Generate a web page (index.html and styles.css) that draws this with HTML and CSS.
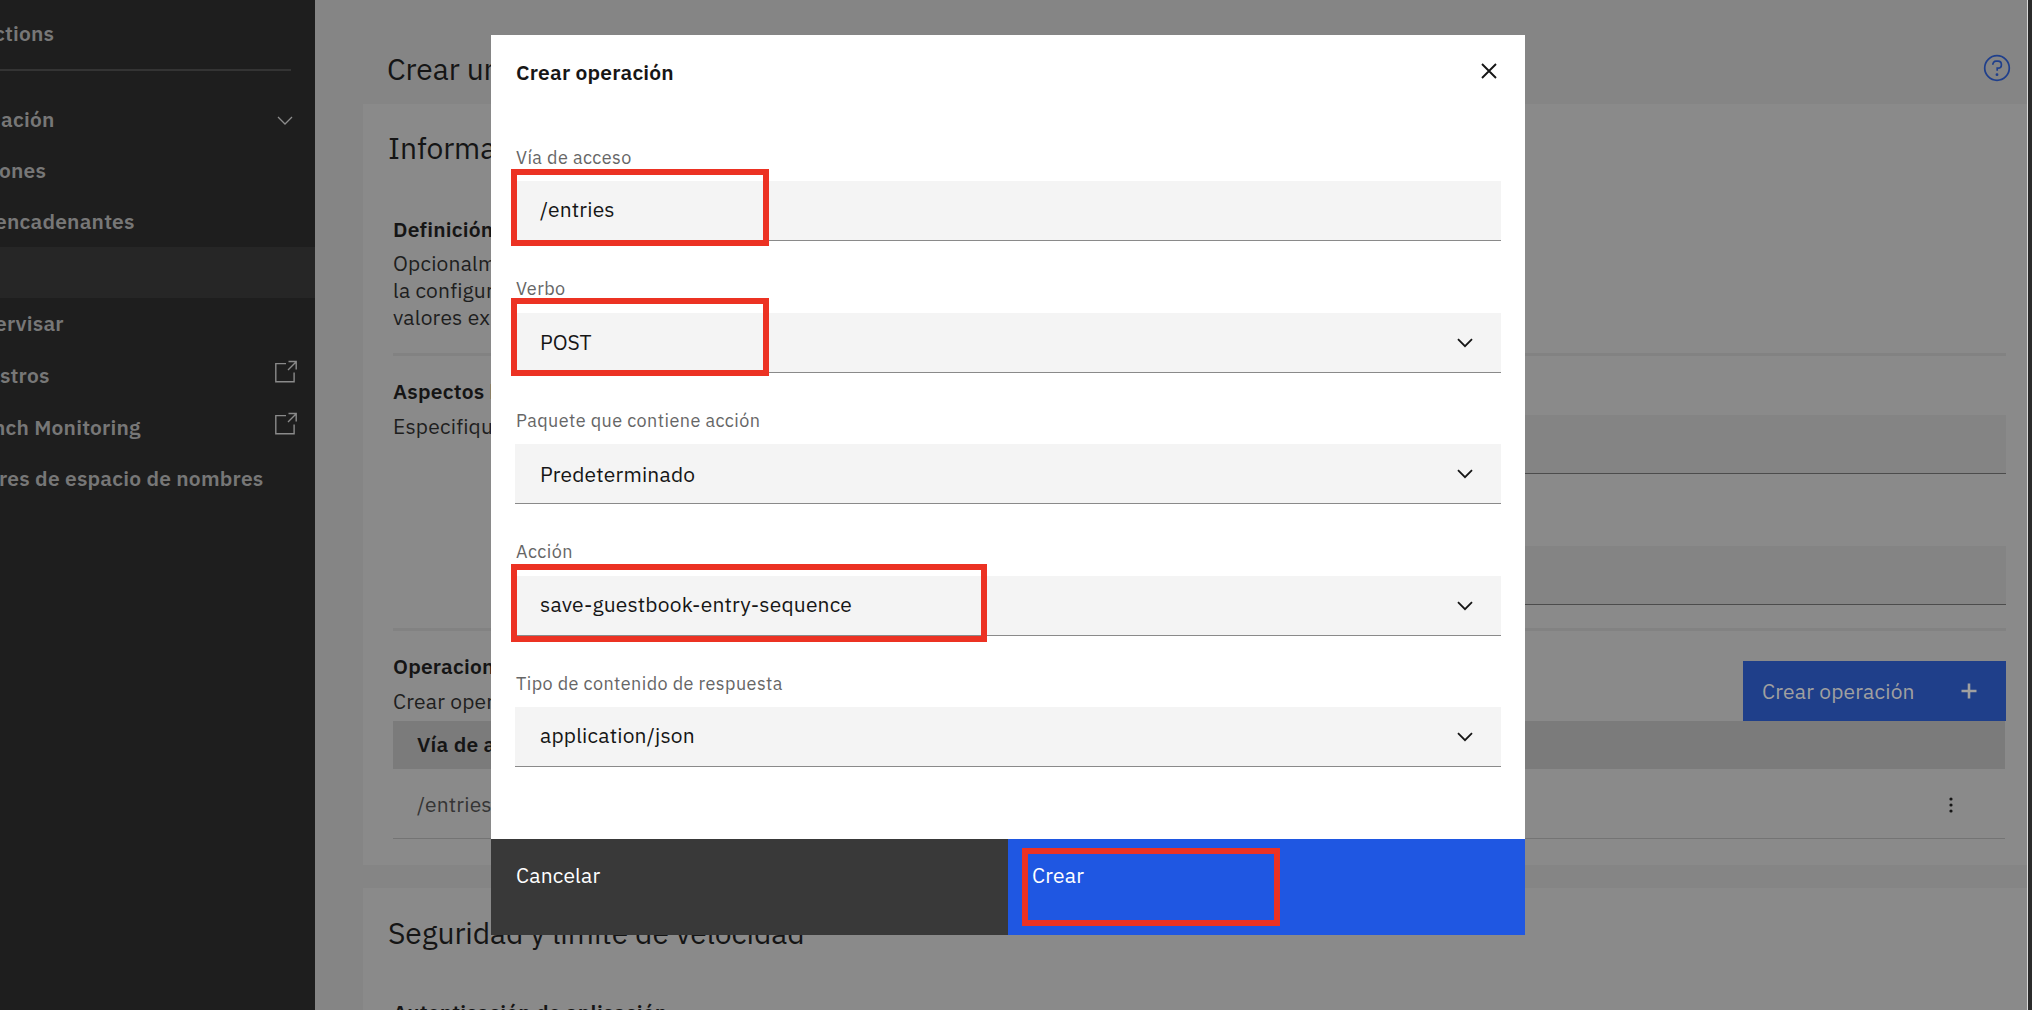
FILE: index.html
```html
<!DOCTYPE html>
<html lang="es">
<head>
<meta charset="utf-8">
<title>Crear operación</title>
<link rel="stylesheet" href="styles.css">
</head>
<body>
<div class="app">
  <nav class="sidebar">
    <div class="brand"><span class="cut-c">ctions</span></div>
    <hr class="side-rule">
    <a class="nav-item nav-parent"><span class="cut-a">ación</span>
      <svg class="nav-chevron" width="16" height="10" viewBox="0 0 16 10"><path d="M1 1l7 7 7-7" fill="none" stroke="#8d8d8d" stroke-width="1.3"/></svg></a>
    <a class="nav-item"><span class="cut-o">ones</span></a>
    <a class="nav-item"><span class="cut-e">encadenantes</span></a>
    <a class="nav-item active"></a>
    <a class="nav-item"><span class="cut-er">ervisar</span></a>
    <a class="nav-item tall"><span class="cut-s">stros</span>
      <svg class="launch" width="24" height="24" viewBox="0 0 24 24"><path d="M12 3.6H1.8v18.2h18.3V12.500M14 10l8-8M14.500 1.500h7.700v8" fill="none" stroke="#8a8a8a" stroke-width="1.4"/></svg></a>
    <a class="nav-item taller"><span class="cut-n">nch Monitoring</span>
      <svg class="launch" width="24" height="24" viewBox="0 0 24 24"><path d="M12 3.6H1.8v18.2h18.3V12.500M14 10l8-8M14.500 1.500h7.700v8" fill="none" stroke="#8a8a8a" stroke-width="1.4"/></svg></a>
    <a class="nav-item"><span class="cut-r">res de espacio de nombres</span></a>
  </nav>

  <main class="content">
    <header class="page-head">
      <h1>Crear un</h1>
      <svg class="help" width="28" height="28" viewBox="0 0 28 28"><circle cx="14" cy="14" r="12.300" fill="none" stroke="#1f3f8c" stroke-width="1.700"/><path d="M9.800 10.800c0-2 1.200-3.600 3.200-3.600h2c2 0 3.400 1.500 3.400 3.500s-1.400 3.500-3.400 3.500h-.8v2.600" fill="none" stroke="#1f3f8c" stroke-width="1.700"/><circle cx="14" cy="20.700" r="1.400" fill="#1f3f8c"/></svg>
    </header>

    <section class="panel info">
      <h2>Informa</h2>
      <div class="block definition">
        <h3>Definición</h3>
        <p>Opcionalm<br>la configur<br>valores ex</p>
      </div>
      <div class="block basics">
        <div class="desc">
          <h3>Aspectos b</h3>
          <p>Especifiqu</p>
        </div>
        <div class="inputs"><div class="dim-input"></div><div class="dim-input"></div></div>
      </div>
      <div class="block operations">
        <div class="ops-head">
          <div class="desc">
            <h3>Operacion</h3>
            <p>Crear oper</p>
          </div>
          <button class="add"><span>Crear operación</span>
            <svg width="16" height="16" viewBox="0 0 16 16"><path d="M8 .5v15M.5 8h15" stroke="#a0a0a0" stroke-width="2.600"/></svg></button>
        </div>
        <div class="table-head">Vía de a</div>
        <div class="table-row"><span>/entries</span>
          <svg width="4" height="16" viewBox="0 0 4 16" fill="#151515"><circle cx="2" cy="2" r="1.600"/><circle cx="2" cy="8" r="1.600"/><circle cx="2" cy="14" r="1.600"/></svg></div>
      </div>
    </section>

    <section class="panel security">
      <h2>Seguridad y límite de velocidad</h2>
      <h3>Autenticación de aplicación</h3>
    </section>
  </main>
  <div class="edge"></div>
</div>

<div class="modal">
  <header class="modal-head">
    <h2>Crear operación</h2>
    <svg width="16" height="16" viewBox="0 0 16 16"><path d="M1 1l14 14M15 1L1 15" stroke="#161616" stroke-width="1.900"/></svg>
  </header>
  <form class="form">
    <div class="field"><label>Vía de acceso</label>
      <div class="control"><span class="value">/entries</span></div></div>
    <div class="field"><label>Verbo</label>
      <div class="control"><span class="value v-post">POST</span>
        <svg class="chev" width="16" height="10" viewBox="0 0 16 10"><path d="M1 1.200l7 7 7-7" fill="none" stroke="#161616" stroke-width="1.800"/></svg></div></div>
    <div class="field"><label>Paquete que contiene acción</label>
      <div class="control"><span class="value v-pkg">Predeterminado</span>
        <svg class="chev" width="16" height="10" viewBox="0 0 16 10"><path d="M1 1.200l7 7 7-7" fill="none" stroke="#161616" stroke-width="1.800"/></svg></div></div>
    <div class="field"><label>Acción</label>
      <div class="control"><span class="value">save-guestbook-entry-sequence</span>
        <svg class="chev" width="16" height="10" viewBox="0 0 16 10"><path d="M1 1.200l7 7 7-7" fill="none" stroke="#161616" stroke-width="1.800"/></svg></div></div>
    <div class="field"><label>Tipo de contenido de respuesta</label>
      <div class="control"><span class="value">application/json</span>
        <svg class="chev" width="16" height="10" viewBox="0 0 16 10"><path d="M1 1.200l7 7 7-7" fill="none" stroke="#161616" stroke-width="1.800"/></svg></div></div>
  </form>
  <footer class="modal-foot">
    <button class="cancel">Cancelar</button>
    <button class="create">Crear</button>
  </footer>
</div>

<div class="mark mark-path"></div>
<div class="mark mark-verb"></div>
<div class="mark mark-action"></div>
<div class="mark mark-create"></div>
</body>
</html>
```
FILE: styles.css
```css
* { box-sizing: border-box; margin: 0; padding: 0; }
body {
  width: 2032px; height: 1010px; overflow: hidden; position: relative;
  font: 400 21px/27px "IBM Plex Sans", Roboto, sans-serif;
  letter-spacing: .19px; color: #161616; background: #858585;
}
h1, h2 { font-size: 30px; font-weight: 400; line-height: 38px; letter-spacing: -.07px; white-space: nowrap; }
h3 { font-size: 21px; font-weight: 600; line-height: 26px; letter-spacing: .2px; white-space: nowrap; }
button { border: 0; font: inherit; letter-spacing: inherit; text-align: left; }
svg { display: block; flex: none; }

.app { display: grid; grid-template-columns: 315px 1fr 5px; height: 1010px; }

/* Sidebar */
.sidebar { background: #1e1e1e; color: #777; font-weight: 600; letter-spacing: .2px; overflow: hidden; white-space: nowrap; }
.brand { height: 69px; padding-top: 20px; }
.side-rule { border: 0; height: 2px; width: 291px; background: #343434; margin-bottom: 23px; }
.nav-item { display: flex; align-items: center; justify-content: space-between; height: 51px; }
.nav-item.active { background: #262626; }
.nav-item.tall { height: 52.500px; }
.nav-item.taller { height: 51.500px; }
.nav-chevron { margin-right: 22px; margin-top: 2px; }
.launch { margin: -6px 17px 0 0; }
.cut-c { margin-left: -6px; }
.cut-a { margin-left: 1px; }
.cut-o { margin-left: -1px; }
.cut-e { margin-left: -5px; }
.cut-er { margin-left: -5px; }
.cut-s { margin-left: 0; }
.cut-n { margin-left: -7px; }
.cut-r { margin-left: -1px; }

/* Page behind the dialog */
.content { display: flex; flex-direction: column; color: #151515; min-width: 0; }
.page-head { flex: none; display: flex; justify-content: space-between; height: 104px; padding: 50px 16px 0 72px; }
.help { margin-top: 3.500px; }
.panel { margin-left: 48px; background: #8a8a8a; flex: none; }
.info { height: 761px; padding: 25px 21px 0 30px; margin-bottom: 23px; }
.info > h2 { margin-left: -5px; }
.block { border-bottom: 3px solid #828282; }
.block p { white-space: nowrap; color: #1e1e1e; }
.definition { height: 189px; padding-top: 49px; }
.definition p { margin-top: 8px; }
.basics { height: 275px; display: flex; padding-top: 22px; }
.desc { width: 540px; }
.desc p { margin-top: 9px; }
.inputs { flex: 1; padding-top: 37px; display: grid; grid-template-rows: 59px 59px; row-gap: 72px; }
.dim-input { background: #848484; border-bottom: 1.500px solid #4c4c4c; }
.operations { border-bottom: 0; padding-top: 22px; }
.ops-head { display: flex; justify-content: space-between; height: 68px; }
.add { display: flex; justify-content: space-between; align-items: center; width: 263px; height: 60px; margin-top: 8px; padding: 0 29px 0 19px; background: #1f3f8a; color: #a0a0a0; }
.table-head { height: 48px; margin-right: 1px; padding: 10px 24px; background: #7b7b7b; font-weight: 600; letter-spacing: .2px; }
.table-row { height: 70px; margin-right: 1px; padding: 2px 52px 0 24px; display: flex; justify-content: space-between; align-items: center; border-bottom: 1px solid #747474; color: #353535; }
.security { height: 122px; padding: 26px 0 0 25px; }
.security h3 { margin: 47px 0 0 5px; }
.edge { background: #2b2b2b; border-left: 1.500px solid #d8d8d8; }

/* Dialog */
.modal { position: absolute; left: 491px; top: 35px; width: 1034px; height: 900px; background: #fff; display: flex; flex-direction: column; }
.modal-head { display: flex; justify-content: space-between; height: 110.500px; padding: 23px 28px 0 25px; }
.modal-head h2 { font-size: 21px; font-weight: 600; line-height: 28px; letter-spacing: .2px; }
.modal-head svg { margin-top: 5px; }
.form { flex: 1; padding: 0 24px; display: flex; flex-direction: column; gap: 36.100px; }
.field label { display: block; height: 35.500px; padding-left: 1px; font-size: 18px; line-height: 24px; letter-spacing: .43px; color: #666; }
.control { display: flex; align-items: center; justify-content: space-between; height: 60px; padding: 0 28px 2px 25px; background: #f4f4f4; border-bottom: 1.500px solid #8a8a8a; }
.chev { margin-top: 3px; }
.v-post { letter-spacing: 0; margin-top: 2px; }
.v-pkg { margin-top: 3px; }
.modal-foot { display: grid; grid-template-columns: 517px 517px; height: 96px; }
.modal-foot button { display: block; padding: 0 0 24px 25px; color: #fff; }
.modal-foot .create { padding-left: 24px; }
.cancel { background: #393939; }
.create { background: #1f57e2; }

/* Highlight rectangles drawn over the dialog */
.mark { position: absolute; border: 6px solid #ec3223; }
.mark-path { left: 511px; top: 169px; width: 258px; height: 77px; }
.mark-verb { left: 511px; top: 298px; width: 258px; height: 78px; }
.mark-action { left: 511px; top: 564px; width: 476px; height: 78px; }
.mark-create { left: 1022px; top: 848px; width: 258px; height: 78px; }
```
